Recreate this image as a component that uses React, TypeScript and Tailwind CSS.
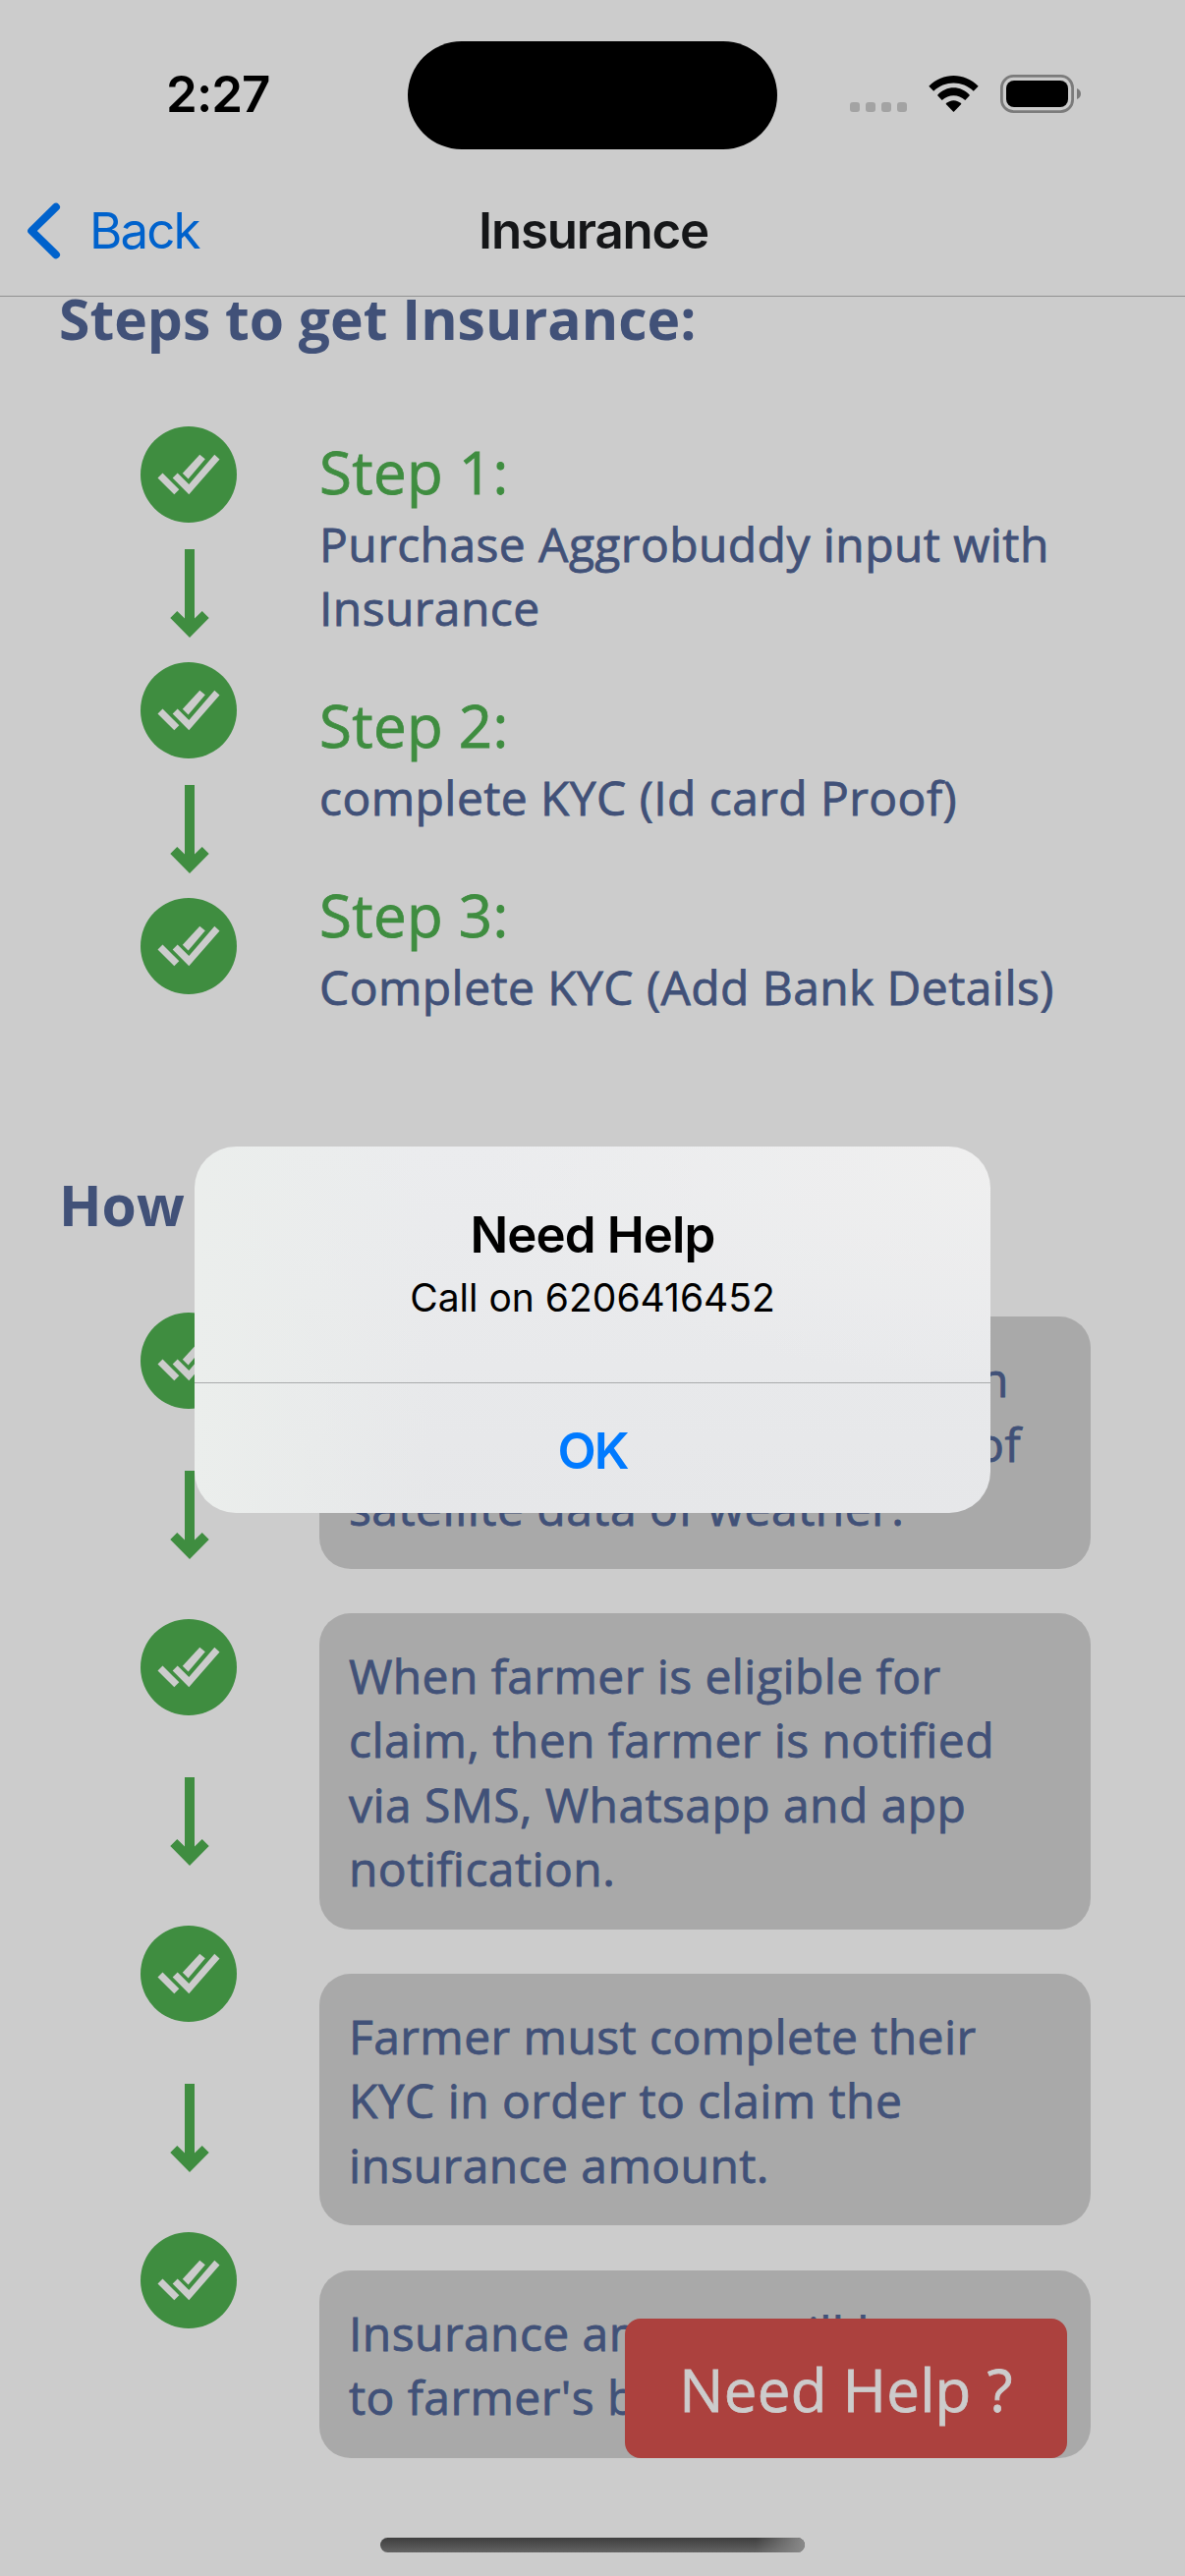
import type { ReactNode } from "react";

function WifiIcon() {
  return (
    <svg width="51" height="37" viewBox="0 0 51 37" fill="#000">
      <path d="M0.3 10.7C14.5 -3.5 36.5 -3.5 50.7 10.7L45.8 15.8C34.5 4.8 16.5 4.8 5.2 15.8Z" />
      <path d="M9 20C18.2 9.8 32.8 9.8 42 20L37.3 25C30.5 18.7 20.5 18.7 13.7 25Z" />
      <path d="M17.5 28.8C22 24 29 24 33.5 28.8L25.5 37Z" />
    </svg>
  );
}

function BatteryIcon() {
  return (
    <svg width="83" height="39" viewBox="0 0 83 39">
      <rect x="1.4" y="1.4" width="72.2" height="36.2" rx="12" fill="none" stroke="#7b7b7b" strokeWidth="2.8" />
      <rect x="6" y="6" width="63" height="27" rx="8" fill="#000" />
      <path d="M78 14C80.8 15 82 17.2 82 19.5S80.8 24 78 25Z" fill="#7b7b7b" />
    </svg>
  );
}

function CheckBadge() {
  return (
    <svg className="block" width="98" height="98" viewBox="0 0 98 98">
      <circle cx="49" cy="49" r="49" fill="#3f8d40" />
      <g fill="#ccc">
        <path d="M17.5 52.5L22.5 47.5L39.3 64.3L34.3 69.3Z" />
        <path d="M32.7 52.5L37.7 47.5L49.3 59L75.3 28.7L80.5 33.5L49.3 69.3Z" />
        <path d="M42.8 47.8L60.3 28.7L65.8 33.3L48.6 53.5Z" />
      </g>
    </svg>
  );
}

function DownArrow() {
  return (
    <svg className="block" width="98" height="90" viewBox="0 0 98 90">
      <path d="M45 0H55V70.5L62.7 63L69.7 70L50 90L30.3 70L37.3 63L45 70.5Z" fill="#3f8d40" />
    </svg>
  );
}

function Card({ children }: { children: ReactNode }) {
  return (
    <div className="w-[785px] rounded-[32px] bg-[#a9a9a9] px-[30px] pt-[31px] pb-[29.2px] text-[48px] leading-[65.4px] tracking-[0.43px] whitespace-nowrap text-[#415178] [-webkit-text-stroke:0.8px_#415178]">
      {children}
    </div>
  );
}

const steps = [
  { title: "Step 1:", lines: ["Purchase Aggrobuddy input with", "Insurance"] },
  { title: "Step 2:", lines: ["complete KYC (Id card Proof)"] },
  { title: "Step 3:", lines: ["Complete KYC (Add Bank Details)"] },
];

const claimSteps = [
  ["When farmer is eligible for", "claim, then farmer is notified", "via SMS, Whatsapp and app", "notification."],
  ["Farmer must complete their", "KYC in order to claim the", "insurance amount."],
  ["Insurance amount will be", "to farmer's bank account."],
];

export default function App() {
  return (
    <div className="relative h-[2622px] w-[1206px] overflow-hidden bg-[#ccc] font-['Open_Sans',sans-serif]">
      <header className="relative z-10 h-[302px] border-b border-[#919191] bg-[#ccc] font-['Inter',sans-serif] text-[51px] leading-[62px]">
        <div className="flex h-[191px] items-center pl-[169px]">
          <span className="font-semibold tracking-[-0.9px] text-black">2:27</span>
          <div className="mr-[105px] ml-auto flex items-center">
            <div className="mt-[27px] flex gap-[6px]">
              {[0, 1, 2, 3].map((i) => (
                <span key={i} className="size-[10px] rounded-[3px] bg-[#a3a3a3]" />
              ))}
            </div>
            <div className="ml-[22px]">
              <WifiIcon />
            </div>
            <div className="ml-[22px]">
              <BatteryIcon />
            </div>
          </div>
        </div>
        <div className="absolute top-[42px] left-[415px] h-[110px] w-[376px] rounded-full bg-black" />
        <nav className="grid h-[87px] grid-cols-[1fr_auto_1fr] items-center">
          <div className="flex items-center pl-[27px] text-[#0062cc]">
            <svg width="36" height="58" viewBox="0 0 36 58" fill="none" stroke="#0062cc" strokeWidth="8" strokeLinecap="round" strokeLinejoin="round">
              <path d="M30 4.7L5.2 29L30 53.3" />
            </svg>
            <span className="ml-[28px] tracking-[-1.9px]">Back</span>
          </div>
          <h1 className="pl-[2px] font-semibold tracking-[-1.2px] text-[#151618]">Insurance</h1>
        </nav>
      </header>

      <main className="-mt-[17px]">
        <h2 className="pl-[60px] text-[57px] leading-[78px] font-bold text-[#415178]">
          Steps to get Insurance:
        </h2>
        <section className="mt-[71px] flex h-[753px] items-start gap-[84px] pl-[143px]">
          <div className="flex flex-col">
            <CheckBadge />
            <div className="pt-[27px] pb-[25px]"><DownArrow /></div>
            <CheckBadge />
            <div className="pt-[27px] pb-[25px]"><DownArrow /></div>
            <CheckBadge />
          </div>
          <div className="flex flex-col gap-[46px] pt-[5px] whitespace-nowrap">
            {steps.map((s) => (
              <div key={s.title}>
                <h3 className="text-[60px] leading-[82px] tracking-[0.3px] text-[#3f8d40] [-webkit-text-stroke:0.8px_#3f8d40]">
                  {s.title}
                </h3>
                {s.lines.map((l) => (
                  <p key={l} className="text-[48px] leading-[65px] tracking-[0.42px] text-[#415178] [-webkit-text-stroke:0.8px_#415178]">
                    {l}
                  </p>
                ))}
              </div>
            ))}
          </div>
        </section>

        <h2 className="pl-[60px] text-[57px] leading-[78px] font-bold text-[#415178]">
          How to claim Insurance?
        </h2>
        <section className="mt-[71px] flex items-start gap-[84px] pl-[143px]">
          <div className="flex flex-col">
            <CheckBadge />
            <div className="pt-[63px] pb-[61px]"><DownArrow /></div>
            <CheckBadge />
            <div className="pt-[63px] pb-[61px]"><DownArrow /></div>
            <CheckBadge />
            <div className="pt-[63px] pb-[61px]"><DownArrow /></div>
            <CheckBadge />
          </div>
          <div className="flex flex-col gap-[45.3px] pt-[4.2px]">
            <Card>
              <p className="w-[672px] [text-align-last:justify]">Claim process is initiated on</p>
              <p className="w-[684px] [text-align-last:justify]">weather condition and use of</p>
              <p className="tracking-[0.48px]">satellite data of weather.</p>
            </Card>
            {claimSteps.map((lines) => (
              <Card key={lines[0]}>
                {lines.map((l) => (
                  <p key={l}>{l}</p>
                ))}
              </Card>
            ))}
          </div>
        </section>
      </main>

      <button className="absolute top-[2360px] left-[636px] h-[142px] w-[450px] rounded-[16px] bg-[#ac413e] pt-[2px] text-[60px] leading-[82px] tracking-[0.3px] text-[#ccc] [-webkit-text-stroke:0.8px_#ccc]">
        Need Help ?
      </button>

      <div className="absolute top-[2583px] left-[387px] h-[15px] w-[432px] overflow-hidden rounded-full bg-linear-to-b from-[#3e3e3e] to-[#646464]">
        <div className="ml-auto h-full w-[50px] bg-linear-to-r from-transparent to-[#8a8a8a]" />
      </div>

      <div
        role="dialog"
        className="absolute top-[1167px] left-[198px] z-20 flex h-[373px] w-[810px] flex-col overflow-hidden rounded-[42px] bg-[radial-gradient(ellipse_at_top_right,#efefef,transparent_45%),linear-gradient(to_right,#ebeeec,transparent_30%),linear-gradient(to_bottom,#ebecee,#e6e7e9)] text-center font-['Inter',sans-serif]"
      >
        <div className="h-[240px] pt-[59px] text-black">
          <h2 className="text-[51px] leading-[62px] font-semibold tracking-[-0.9px]">Need Help</h2>
          <p className="mt-[9px] text-[39px] leading-[47px]">Call on 6206416452</p>
        </div>
        <div className="h-px bg-[#a9abac]" />
        <button className="flex-1 pt-[5px] text-[51px] leading-[62px] font-semibold tracking-[-2px] text-[#007aff]">OK</button>
      </div>
    </div>
  );
}
